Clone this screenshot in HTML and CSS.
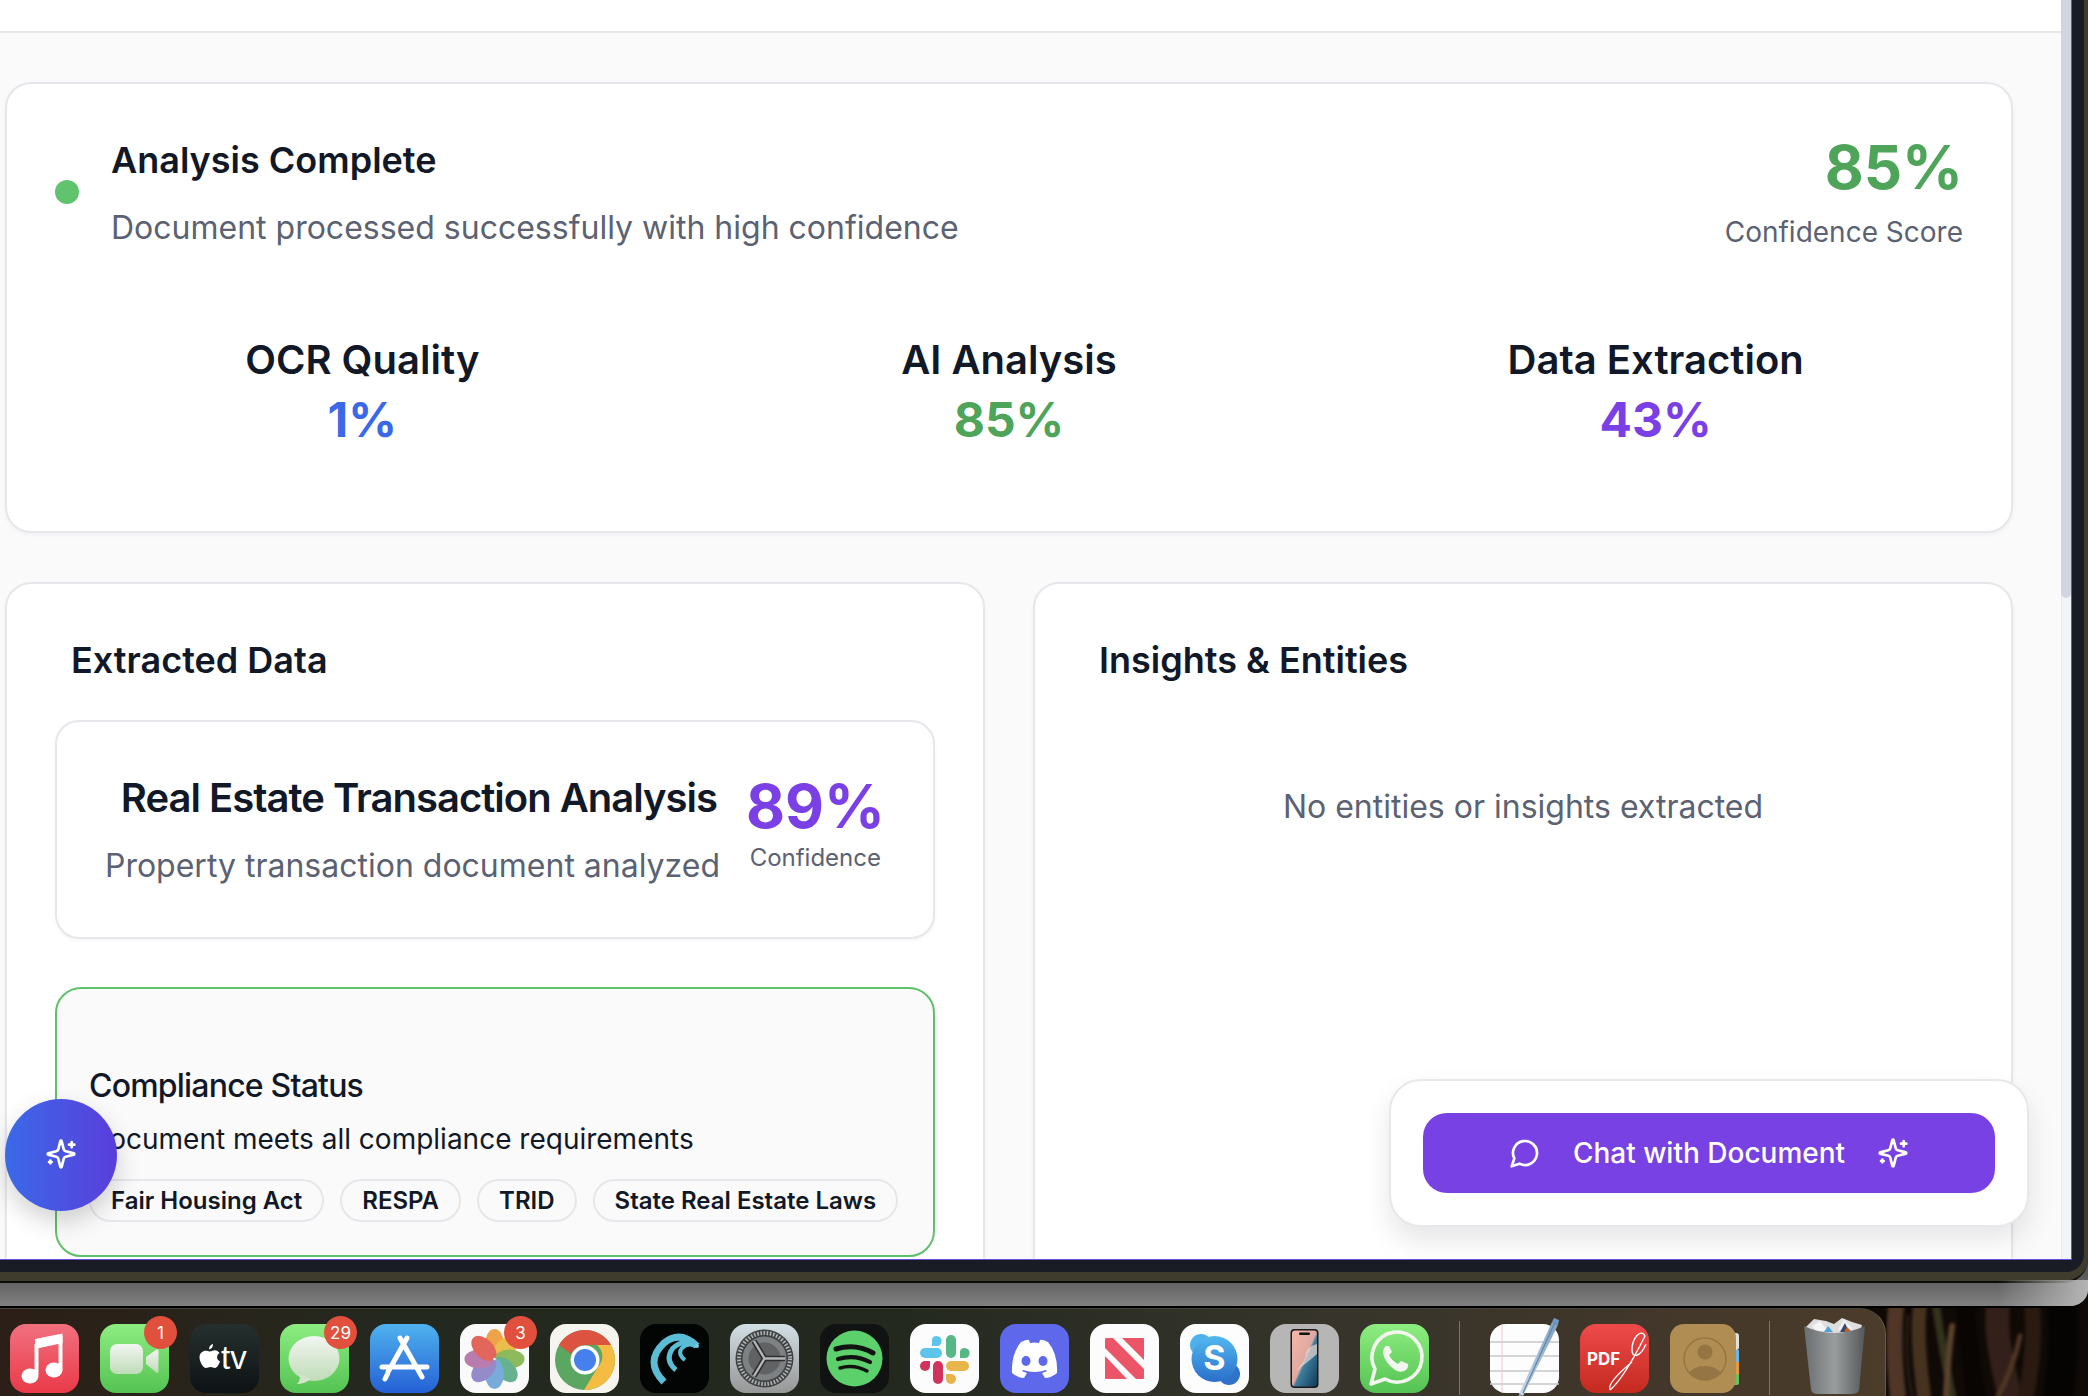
FILE: index.html
```html
<!DOCTYPE html>
<html lang="en">
<head>
<meta charset="utf-8">
<title>Document Analysis</title>
<link rel="stylesheet" href="styles.css">
</head>
<body>
<svg class="defs" width="0" height="0" aria-hidden="true">
  <defs>
    <symbol id="i-spark" viewBox="0 0 24 24"><path d="M9.937 15.5A2 2 0 0 0 8.5 14.063l-6.135-1.582a.5.5 0 0 1 0-.962L8.5 9.936A2 2 0 0 0 9.937 8.5l1.582-6.135a.5.5 0 0 1 .963 0L14.063 8.5A2 2 0 0 0 15.5 9.937l6.135 1.581a.5.5 0 0 1 0 .964L15.5 14.063a2 2 0 0 0-1.437 1.437l-1.582 6.135a.5.5 0 0 1-.963 0z"/><path d="M20 3v4M22 5h-4M4 17v2M5 18H3"/></symbol>
    <symbol id="i-chat" viewBox="0 0 24 24"><path d="M7.9 20A9 9 0 1 0 4 16.1L2 22Z"/></symbol>
    <linearGradient id="g-music" x1="0" y1="0" x2="0" y2="1"><stop offset="0" stop-color="#f2707f"/><stop offset="1" stop-color="#e93a48"/></linearGradient>
    <linearGradient id="g-green" x1="0" y1="0" x2="0" y2="1"><stop offset="0" stop-color="#8ded80"/><stop offset="1" stop-color="#54c353"/></linearGradient>
    <linearGradient id="g-tv" x1="0" y1="0" x2="0" y2="1"><stop offset="0" stop-color="#25302e"/><stop offset="1" stop-color="#0d1214"/></linearGradient>
    <linearGradient id="g-store" x1="0" y1="0" x2="0" y2="1"><stop offset="0" stop-color="#4fb2ee"/><stop offset="1" stop-color="#2560d5"/></linearGradient>
    <linearGradient id="g-gear" x1="0" y1="0" x2="0" y2="1"><stop offset="0" stop-color="#d2dfe4"/><stop offset="1" stop-color="#979797"/></linearGradient>
    <linearGradient id="g-pale" x1="0" y1="0" x2="0" y2="1"><stop offset="0" stop-color="#f3f5f1"/><stop offset="1" stop-color="#bfdcb8"/></linearGradient>
    <linearGradient id="g-skype" x1="0" y1="0" x2="0" y2="1"><stop offset="0" stop-color="#52b8ef"/><stop offset="1" stop-color="#2a6fcb"/></linearGradient>
    <linearGradient id="g-pdf" x1="0" y1="0" x2="0" y2="1"><stop offset="0" stop-color="#ee4a4a"/><stop offset="1" stop-color="#c42a20"/></linearGradient>
    <linearGradient id="g-can" x1="0" y1="0" x2="1" y2="0"><stop offset="0" stop-color="#6b6e70"/><stop offset=".5" stop-color="#9a9d9e"/><stop offset="1" stop-color="#55585a"/></linearGradient>
    <linearGradient id="g-phone" x1="0" y1="0" x2="1" y2="1"><stop offset="0" stop-color="#f5b8a8"/><stop offset=".5" stop-color="#dfa8a0"/><stop offset=".55" stop-color="#3e7f9f"/><stop offset="1" stop-color="#123a58"/></linearGradient>
    <linearGradient id="g-pen" x1="0" y1="0" x2="1" y2="0"><stop offset="0" stop-color="#c9d9e8"/><stop offset="1" stop-color="#7f9fc0"/></linearGradient>
  </defs>
</svg>

<div class="laptop">
  <div class="lid">
    <div class="bezel">
      <div class="window">
        <main class="page">
          <header class="topbar"></header>
          <div class="content">
            <section class="card summary">
              <div class="summary-head">
                <div class="status">
                  <span class="dot"></span>
                  <div class="status-text">
                    <h2 class="title">Analysis Complete</h2>
                    <p class="muted">Document processed successfully with high confidence</p>
                  </div>
                </div>
                <div class="score">
                  <div class="score-value">85%</div>
                  <div class="score-label">Confidence Score</div>
                </div>
              </div>
              <div class="stats">
                <div class="stat"><div class="stat-label">OCR Quality</div><div class="stat-value blue">1%</div></div>
                <div class="stat"><div class="stat-label">AI Analysis</div><div class="stat-value green">85%</div></div>
                <div class="stat"><div class="stat-label">Data Extraction</div><div class="stat-value purple">43%</div></div>
              </div>
            </section>

            <div class="columns">
              <section class="card panel">
                <h2 class="title panel-title">Extracted Data</h2>
                <div class="doc-card">
                  <div class="doc-text">
                    <h3 class="doc-title">Real Estate Transaction Analysis</h3>
                    <p class="muted">Property transaction document analyzed</p>
                  </div>
                  <div class="doc-score">
                    <div class="doc-value">89%</div>
                    <div class="doc-label">Confidence</div>
                  </div>
                </div>
                <div class="compliance">
                  <h4 class="comp-title">Compliance Status</h4>
                  <p class="comp-text">Document meets all compliance requirements</p>
                  <div class="chips">
                    <span class="chip">Fair Housing Act</span>
                    <span class="chip">RESPA</span>
                    <span class="chip">TRID</span>
                    <span class="chip">State Real Estate Laws</span>
                  </div>
                </div>
              </section>
              <section class="card panel">
                <h2 class="title panel-title">Insights &amp; Entities</h2>
                <p class="muted empty">No entities or insights extracted</p>
              </section>
            </div>
          </div>
        </main>
        <div class="scrollbar"><div class="thumb"></div></div>

        <button class="fab" type="button" aria-label="AI assistant"><svg class="ico"><use href="#i-spark"/></svg></button>
        <div class="chat-box">
          <button class="chat-btn" type="button">
            <svg class="ico"><use href="#i-chat"/></svg>
            <span>Chat with Document</span>
            <svg class="ico"><use href="#i-spark"/></svg>
          </button>
        </div>
      </div>
    </div>
  </div>
</div>

<div class="desk">
  <nav class="dock">
    <div class="app"><svg viewBox="0 0 69 69"><rect width="69" height="69" rx="16" fill="url(#g-music)"/><path d="M26.5 20 V51" stroke="#fff" stroke-width="4"/><path d="M50.5 12 V46" stroke="#fff" stroke-width="4"/><path d="M25 15 L52.5 9.5 V19 L25 25Z" fill="#fff"/><ellipse cx="20" cy="52" rx="8.5" ry="7.5" fill="#fff"/><ellipse cx="44" cy="46" rx="8.5" ry="7.5" fill="#fff"/></svg></div>
    <div class="app"><svg viewBox="0 0 69 69"><rect width="69" height="69" rx="16" fill="url(#g-green)"/><rect x="10" y="20" width="33" height="30" rx="7" fill="url(#g-pale)"/><path d="M46 33 L57 25 Q58.5 25 58.5 27 V47 Q58.5 49 57 49 L46 40Z" fill="url(#g-pale)"/></svg><span class="badge">1</span></div>
    <div class="app"><svg viewBox="0 0 69 69"><rect width="69" height="69" rx="16" fill="url(#g-tv)"/><path d="M23 20 Q23 24.5 19 25.5 Q19 21 23 20Z M19.5 27.5 C22 27.5 23 26.3 25 26.3 C27 26.3 28.3 27.5 29.5 29 C26 31 26.5 36 30 37.3 C29 40.5 27 44 25 44 C23.5 44 22.5 43 20.5 43 C18.5 43 17.5 44 16 44 C13 44 9.5 37.5 9.5 33.5 C9.5 29 13 26.8 15.5 26.8 C17 26.8 18.3 27.5 19.5 27.5Z" fill="#fff"/><text x="31" y="45" class="tv-text">tv</text></svg></div>
    <div class="app"><svg viewBox="0 0 69 69"><rect width="69" height="69" rx="16" fill="url(#g-green)"/><ellipse cx="34" cy="34.5" rx="25.5" ry="22.5" fill="url(#g-pale)"/><path d="M20 50 Q20.5 57 17 60 Q25 60 31 55Z" fill="#cfe4c8"/></svg><span class="badge">29</span></div>
    <div class="app"><svg viewBox="0 0 69 69"><rect width="69" height="69" rx="16" fill="url(#g-store)"/><path d="M37 14 L18 48 M30 14 L52 53 M12 43 H57 M15 55 L17.5 50" fill="none" stroke="#fff" stroke-width="5" stroke-linecap="round"/></svg></div>
    <div class="app"><svg viewBox="0 0 69 69"><rect width="69" height="69" rx="16" fill="#fafafa"/><g class="petals"><ellipse cx="34.5" cy="20" rx="9.5" ry="15" fill="#ee9a35"/><ellipse cx="34.5" cy="20" rx="9.5" ry="15" fill="#e9b83a" transform="rotate(45 34.5 35)"/><ellipse cx="34.5" cy="20" rx="9.5" ry="15" fill="#82b54c" transform="rotate(90 34.5 35)"/><ellipse cx="34.5" cy="20" rx="9.5" ry="15" fill="#58ab83" transform="rotate(135 34.5 35)"/><ellipse cx="34.5" cy="20" rx="9.5" ry="15" fill="#6ba3d8" transform="rotate(180 34.5 35)"/><ellipse cx="34.5" cy="20" rx="9.5" ry="15" fill="#8a80c6" transform="rotate(225 34.5 35)"/><ellipse cx="34.5" cy="20" rx="9.5" ry="15" fill="#b26fa6" transform="rotate(270 34.5 35)"/><ellipse cx="34.5" cy="20" rx="9.5" ry="15" fill="#e0564b" transform="rotate(315 34.5 35)"/></g><circle cx="34.5" cy="35" r="1.2" fill="#fff"/></svg><span class="badge">3</span></div>
    <div class="app"><svg viewBox="0 0 69 69"><rect width="69" height="69" rx="16" fill="#f6f4ef"/><circle cx="35" cy="36" r="30" fill="#5ba660"/><path d="M9 21 A30 30 0 0 1 61 21 H35 A15 15 0 0 0 21 30Z" fill="#dc5340"/><path d="M61 21 A30 30 0 0 1 34 66 L48 43 A15 15 0 0 0 47 21Z" fill="#f4bc42"/><circle cx="35" cy="36" r="14.5" fill="#fff"/><circle cx="35" cy="36" r="11" fill="#4580ec"/></svg></div>
    <div class="app"><svg viewBox="0 0 69 69"><rect width="69" height="69" rx="16" fill="#030404"/><g fill="none" stroke="#5bbcd6" stroke-linecap="butt"><path d="M24 58 Q4 38 24 19 Q40 6 57 22" stroke-width="7"/><path d="M36 46 Q24 36 33 24 Q44 14 56 22" stroke-width="5"/><path d="M45 36 Q37 30 42 24 Q48 18 56 22" stroke-width="4"/></g><circle cx="57" cy="22" r="2" fill="#6fd0e6"/></svg></div>
    <div class="app"><svg viewBox="0 0 69 69"><rect width="69" height="69" rx="16" fill="url(#g-gear)"/><circle cx="34.5" cy="34.5" r="29" fill="#3f4143"/><circle cx="34.5" cy="34.5" r="25.5" fill="none" stroke="#b0b3b4" stroke-width="4" stroke-dasharray="1.6 1.6"/><circle cx="34.5" cy="34.5" r="22" fill="#7e8183"/><circle cx="34.5" cy="34.5" r="16" fill="#606264"/><path d="M34.5 34.5 L24 17 M34.5 34.5 H55 M34.5 34.5 L24 52" stroke="#2e2f31" stroke-width="5.5"/><path d="M34.5 34.5 L24 17 M34.5 34.5 H55 M34.5 34.5 L24 52" stroke="#b4b6b7" stroke-width="2.4"/></svg></div>
    <div class="app"><svg viewBox="0 0 69 69"><rect width="69" height="69" rx="16" fill="#111212"/><circle cx="34.5" cy="34.5" r="28" fill="#5cd16b"/><g fill="none" stroke="#111212" stroke-linecap="round"><path d="M16 25 Q36 19 53 29" stroke-width="5"/><path d="M18 35 Q35 30 50 38" stroke-width="4.2"/><path d="M20 44 Q34 40 47 47" stroke-width="3.5"/></g></svg></div>
    <div class="app"><svg viewBox="0 0 69 69"><rect width="69" height="69" rx="16" fill="#fcfcfc"/><rect x="10" y="24" width="22" height="10" rx="5" fill="#5dc4ea"/><path d="M22 22 V15 A5 5 0 1 1 27 22Z" fill="#5dc4ea"/><rect x="36" y="11" width="10" height="23" rx="5" fill="#57b886"/><path d="M49 34 V27 A5 5 0 1 1 54 34Z" fill="#57b886" transform="translate(1 0)"/><rect x="36" y="37" width="23" height="10" rx="5" fill="#e8b54a"/><path d="M36 50 H41 A5 5 0 1 1 36 55Z" fill="#e8b54a"/><rect x="23" y="37" width="10" height="23" rx="5" fill="#d1335e"/><path d="M20 37 V42 A5 5 0 1 1 15 37Z" fill="#d1335e"/></svg></div>
    <div class="app"><svg viewBox="0 0 69 69"><rect width="69" height="69" rx="16" fill="#5e68ea"/><path d="M21 18 Q28 15 29 16 L30 19 Q34.5 18 39 19 L40 16 Q42 15 48 18 Q58 30 57 49 Q51 54 45 54 L42 49 Q45 48 47 47 L46 46 Q34.5 50 23 46 L22 47 Q24 48 27 49 L24 54 Q18 54 12 49 Q11 30 21 18Z" fill="#fff"/><ellipse cx="26" cy="37" rx="4.5" ry="5" fill="#5e68ea"/><ellipse cx="43" cy="37" rx="4.5" ry="5" fill="#5e68ea"/></svg></div>
    <div class="app"><svg viewBox="0 0 69 69"><rect width="69" height="69" rx="16" fill="#fcfcfc"/><path d="M16 14 H23 L54 45 V54 Q54 55 53 55 H46 L15 24 V15 Q15 14 16 14Z" fill="#ec5468"/><path d="M32 14 H53 Q54 14 54 15 V36Z" fill="#ec5468"/><path d="M15 32 L37 55 H16 Q15 55 15 54Z" fill="#ec5468"/></svg></div>
    <div class="app"><svg viewBox="0 0 69 69"><rect width="69" height="69" rx="16" fill="#fdfdfd"/><circle cx="21" cy="21" r="11" fill="#4db2ec"/><circle cx="49" cy="50" r="11" fill="#2f72c9"/><circle cx="34.5" cy="35" r="23" fill="url(#g-skype)"/><text x="34.5" y="46" class="skype-text">S</text></svg></div>
    <div class="app"><svg viewBox="0 0 69 69"><rect width="69" height="69" rx="16" fill="#b6b6b4"/><rect x="20.5" y="5" width="28" height="59" rx="4" fill="#1a1a1a"/><rect x="22" y="6.5" width="25" height="56" rx="3" fill="url(#g-phone)"/><path d="M22 50 Q38 38 47 30 V20 Q36 22 35 34 Q30 44 22 50Z" fill="#e9d9d2" opacity=".7"/><rect x="29" y="8.5" width="11" height="2.5" rx="1.2" fill="#111"/></svg></div>
    <div class="app"><svg viewBox="0 0 69 69"><rect width="69" height="69" rx="16" fill="url(#g-green)"/><path d="M11 60 L15 45 A25 25 0 1 1 25 55Z" fill="none" stroke="#f2f6ef" stroke-width="3.6" stroke-linejoin="round"/><path d="M26 22 Q23 24 23 29 Q25 39 35 46 Q42 50 47 45 Q49 42 48 40 L41 37 L38 40 Q32 37 29 31 L32 28 L29 22Z" fill="#f2f6ef"/></svg></div>
    <div class="divider"></div>
    <div class="app"><svg viewBox="0 0 69 69"><rect width="69" height="69" rx="16" fill="#fdfdfd"/><path d="M0 18 H69 M0 32 H69 M0 47 H69 M0 60 H69" stroke="#c6c6c6" stroke-width="1.6"/><path d="M12 0 V69" stroke="#f0c7c7" stroke-width="1"/><path d="M29 70 L62 -2 L68 1 L33 72Z" fill="url(#g-pen)"/><path d="M33 69 L65 -2" stroke="#5f86ad" stroke-width="1.2"/><path d="M29 70 L27 78 L33 72Z" fill="#8b98a4"/><path d="M62 -2 L64 -6 L69 -4 L68 1Z" fill="#6e9ac4"/></svg></div>
    <div class="app"><svg viewBox="0 0 69 69"><rect width="69" height="69" rx="16" fill="url(#g-pdf)"/><text x="7" y="41" class="pdf-text">PDF</text><path d="M30 66 C42 56 55 32 65 12 C61 4 52 14 52 26 C52 34 60 34 66 20 M30 66 C27 60 40 48 52 38" fill="none" stroke="#fff" stroke-width="1.4"/></svg></div>
    <div class="app"><svg viewBox="0 0 69 69"><rect x="56" y="9" width="13" height="17" rx="3" fill="#e2e2dc"/><rect x="62" y="26" width="7" height="13" fill="#6cb8e8"/><rect x="62" y="38" width="7" height="13" fill="#e89a3c"/><rect x="62" y="50" width="7" height="11" rx="2" fill="#6ac45c"/><rect width="66" height="69" rx="14" fill="#b08d52"/><circle cx="35" cy="35" r="21" fill="none" stroke="#957543" stroke-width="1.4"/><circle cx="35" cy="28" r="7.5" fill="#957543"/><path d="M19 49 Q24 42 35 42 Q46 42 51 49 Q44 56 35 56 Q26 56 19 49Z" fill="#957543"/></svg></div>
    <div class="divider"></div>
    <div class="app"><svg viewBox="0 0 69 69"><path d="M6 3 L14 -5 L26 -3 L34 0 L42 -6 L52 -2 L62 1 L60 10 H8Z" fill="#dedede"/><path d="M12 2 L20 -3 L27 6 L17 8Z" fill="#f4f4f4"/><path d="M38 6 L44 -5 L53 5Z" fill="#f0f0f0"/><path d="M24 8 L28 2 L33 8Z" fill="#4fa2d8"/><path d="M40 8 L45 -1 L49 8Z" fill="#39486e"/><path d="M44 8 L47 3 L52 8Z" fill="#b8662a"/><path d="M4 2 Q34 16 65 2 L59 66 Q58 70 52 70 H18 Q12 70 11 66Z" fill="url(#g-can)"/></svg></div>
  </nav>
  <svg class="wall" viewBox="0 0 202 90" preserveAspectRatio="none" aria-hidden="true">
    <rect width="202" height="90" fill="#100a07"/>
    <g class="bark" fill="none" stroke-linecap="round">
      <path d="M10 0 Q6 40 12 90" stroke="#4f3626" stroke-width="16"/>
      <path d="M34 0 Q30 30 38 90" stroke="#46321f" stroke-width="14"/>
      <path d="M50 0 Q56 40 66 90" stroke="#33331c" stroke-width="8"/>
      <path d="M66 20 Q62 50 60 90" stroke="#5a422c" stroke-width="6"/>
      <path d="M22 10 Q18 50 26 90" stroke="#2a1b12" stroke-width="3"/>
      <path d="M80 0 Q82 40 90 90" stroke="#080503" stroke-width="18"/>
      <path d="M112 0 Q108 30 124 90" stroke="#33201a" stroke-width="24"/>
      <path d="M146 0 Q150 40 140 90" stroke="#2a1a11" stroke-width="16"/>
      <path d="M134 30 Q128 60 112 90" stroke="#4f3624" stroke-width="5"/>
      <path d="M176 0 Q180 40 172 90" stroke="#060403" stroke-width="30"/>
    </g>
  </svg>
</div>
</body>
</html>
```

FILE: styles.css
```css
* { box-sizing: border-box; }
html, body { margin: 0; padding: 0; }
body {
  width: 2088px;
  height: 1396px;
  overflow: hidden;
  background: #100a07;
  font-family: Inter, "Noto Sans", sans-serif;
  color: #111827;
  display: flex;
  flex-direction: column;
}
.defs { position: absolute; }
h2, h3, h4, p { margin: 0; }

.laptop {
  height: 1308px;
  flex: none;
  background: linear-gradient(180deg, #565656 1272px, #808080 1306px);
  border-bottom: 2px solid #000;
  border-bottom-right-radius: 18px;
  position: relative;
  overflow: hidden;
}
.laptop::after {
  content: "";
  position: absolute;
  right: 0;
  bottom: 0;
  width: 90px;
  height: 26px;
  background: linear-gradient(90deg, rgba(190,190,190,0), #b5b5b5);
}
.lid {
  height: 1283px;
  background: #3f3b2d;
  border-bottom: 2px solid #0a0a08;
  border-bottom-right-radius: 24px;
  padding: 0 4px 9px 0;
}
.bezel {
  height: 1272px;
  background: #191c24;
  padding: 0 12px 12px 0;
  border-bottom-right-radius: 18px;
}
.window {
  position: relative;
  height: 1260px;
  display: flex;
  overflow: hidden;
  border-right: 1px solid #6a4ee0;
  border-bottom: 1px solid #6a4ee0;
  background: #fafafb;
}

.page { flex: 1; min-width: 0; display: flex; flex-direction: column; }
.topbar { height: 33px; flex: none; background: #fff; border-bottom: 2px solid #e5e7eb; }
.content {
  padding: 49px 48px 0 5px;
  display: flex;
  flex-direction: column;
  gap: 49px;
  background: #fafafb;
}

.scrollbar {
  width: 10px;
  flex: none;
  background: #f2f3f7;
  border-left: 1px solid #e8e9ed;
}
.thumb { height: 598px; margin-left: -1px; background: #d1d5e0; border-radius: 0 0 8px 8px; }

.card {
  background: #fff;
  border: 2px solid #e5e7eb;
  border-radius: 26px;
  box-shadow: 0 2px 4px rgba(0,0,0,.04);
}
.summary { height: 451px; padding: 56px 48px 0 48px; }
.summary-head { display: flex; justify-content: space-between; align-items: flex-start; }
.status { display: flex; align-items: center; gap: 32px; }
.dot { width: 24px; height: 24px; margin-top: -4px; border-radius: 50%; background: #5fc46d; flex: none; }
.title { font-size: 36px; line-height: 40px; font-weight: 600; color: #111827; }
.muted { font-size: 32px; line-height: 40px; color: #5b6272; white-space: nowrap; }
.status-text .muted { margin-top: 28px; }
.score { text-align: right; margin-top: -3px; }
.score-value { font-size: 60px; line-height: 60px; font-weight: 700; color: #4ea55a; }
.score-label { margin-top: 15px; font-size: 28px; line-height: 40px; color: #5b6272; }

.stats { margin-top: 84px; display: grid; grid-template-columns: repeat(3, 1fr); gap: 32px; text-align: center; }
.stat-label { font-size: 40px; line-height: 48px; font-weight: 600; color: #111827; }
.stat-value { font-size: 48px; line-height: 56px; font-weight: 700; margin-top: 8px; }
.blue { color: #3b68e8; }
.green { color: #4ea55a; }
.purple { color: #7a40e6; }

.columns { display: grid; grid-template-columns: 980px 980px; gap: 48px; }
.panel { height: 900px; padding: 56px 48px 0 48px; }
.panel-title { padding-left: 16px; }
.empty { text-align: center; margin-top: 107px; }
.doc-card {
  margin-top: 40px;
  height: 219px;
  background: #fff;
  border: 2px solid #e5e7eb;
  border-radius: 24px;
  box-shadow: 0 2px 4px rgba(0,0,0,.04);
  padding: 52px 52px 0 34px;
  display: flex;
  justify-content: flex-end;
  gap: 26px;
}
.doc-text { text-align: right; flex: none; }
.doc-title { font-size: 40px; line-height: 48px; font-weight: 600; color: #111827; letter-spacing: -1px; margin-right: 3px; white-space: nowrap; }
.doc-text .muted { margin-top: 24px; }
.doc-score { text-align: right; flex: none; margin-top: 2px; }
.doc-value { font-size: 60px; line-height: 60px; font-weight: 700; color: #7a40e6; margin-right: -4px; }
.doc-label { font-size: 24px; line-height: 32px; color: #5b6272; margin-top: 6px; }

.compliance {
  margin-top: 48px;
  height: 270px;
  background: #fafafa;
  border: 2px solid #5fc06b;
  border-radius: 26px;
  padding: 77px 32px 0 32px;
}
.comp-title { font-size: 32px; line-height: 40px; font-weight: 500; color: #111827; letter-spacing: -.8px; }
.comp-text { font-size: 28px; line-height: 36px; margin-top: 15px; color: #111827; }
.chips { display: flex; gap: 16px; margin-top: 22px; }
.chip {
  height: 43px;
  padding: 0 20px;
  flex: none;
  white-space: nowrap;
  display: flex;
  align-items: center;
  border: 2px solid #e5e7eb;
  border-radius: 22px;
  background: #fafafa;
  font-size: 24px;
  font-weight: 600;
  color: #111827;
}

.ico { width: 32px; height: 32px; fill: none; stroke: #fff; stroke-width: 2; stroke-linecap: round; stroke-linejoin: round; flex: none; }
button { font-family: inherit; }
.fab {
  position: absolute;
  left: 5px;
  top: 1099px;
  width: 112px;
  height: 112px;
  padding: 0;
  border: 0;
  border-radius: 50%;
  background: linear-gradient(90deg, #3a6ae8, #5a3ddb);
  box-shadow: 0 10px 24px rgba(0,0,0,.18);
  display: flex;
  align-items: center;
  justify-content: center;
}
.fab .ico { margin-top: -3px; }
.chat-box {
  position: absolute;
  left: 1389px;
  top: 1079px;
  width: 640px;
  height: 148px;
  padding: 32px 32px 32px;
  background: #fff;
  border: 2px solid #e7e8ec;
  border-radius: 32px;
  box-shadow: 0 14px 28px rgba(0,0,0,.10);
}
.chat-btn {
  width: 100%;
  height: 80px;
  border: 0;
  border-radius: 24px;
  background: #7841e4;
  color: #fff;
  font-size: 28px;
  font-weight: 500;
  display: flex;
  align-items: center;
  justify-content: center;
  gap: 32px;
}

.desk { flex: 1; display: flex; min-height: 0; margin-top: -2px; }
.dock {
  width: 1886px;
  flex: none;
  height: 90px;
  margin-top: 2px;
  padding: 15px 0 0 10px;
  display: flex;
  gap: 21px;
  background: linear-gradient(90deg, #2c1f17 0, #24291f 400px, #24291f 900px, #35342b 1300px, #40362a 1600px, #4c3c2a 1886px);
  border-top: 1px solid #454536;
  border-right: 1px solid #6a5a42;
  border-top-right-radius: 26px;
}
.wall { flex: 1; min-width: 0; height: 90px; display: block; }
.bark { filter: blur(1.4px); }
.app { width: 69px; height: 69px; flex: none; position: relative; }
.app svg { display: block; width: 69px; height: 69px; overflow: visible; }
.divider { width: 1px; height: 74px; margin: -3px 9px 0; background: #77756b; flex: none; }
.badge {
  position: absolute;
  right: -8px;
  top: -8px;
  width: 33px;
  height: 33px;
  border-radius: 50%;
  background: #e1503c;
  color: #fff;
  font-size: 17px;
  display: flex;
  align-items: center;
  justify-content: center;
}
.tv-text { font: 400 33px "Liberation Sans", sans-serif; fill: #fff; }
.skype-text { font: 700 34px Inter, sans-serif; fill: #fff; text-anchor: middle; }
.pdf-text { font: 700 17px Inter, sans-serif; fill: #fff; }
.petals { opacity: .9; }
```
